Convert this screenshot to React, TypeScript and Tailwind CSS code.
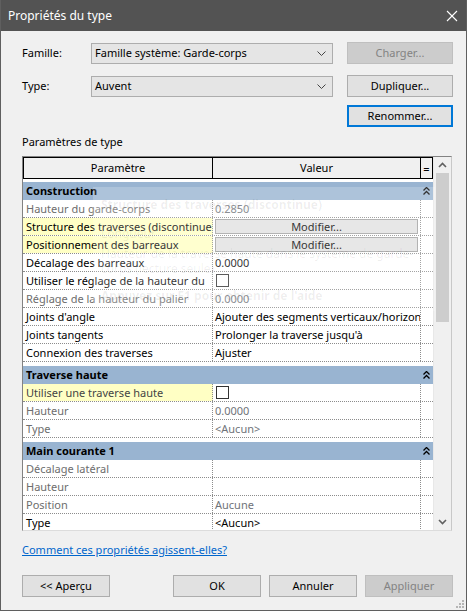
import React from "react";

type RowDef = {
  p: string;
  v?: string;
  kind?: "text" | "button" | "check";
  pGray?: boolean;
  vGray?: boolean;
  yellow?: boolean;
};

type Section = { title: string; rows: RowDef[] };

const sections: Section[] = [
  {
    title: "Construction",
    rows: [
      { p: "Hauteur du garde-corps", v: "0.2850", pGray: true, vGray: true },
      { p: "Structure des traverses (discontinue)", kind: "button", yellow: true },
      { p: "Positionnement des barreaux", kind: "button", yellow: true },
      { p: "Décalage des barreaux", v: "0.0000" },
      { p: "Utiliser le réglage de la hauteur du", kind: "check" },
      { p: "Réglage de la hauteur du palier", v: "0.0000", pGray: true, vGray: true },
      { p: "Joints d'angle", v: "Ajouter des segments verticaux/horizontaux" },
      { p: "Joints tangents", v: "Prolonger la traverse jusqu'à" },
      { p: "Connexion des traverses", v: "Ajuster" },
    ],
  },
  {
    title: "Traverse haute",
    rows: [
      { p: "Utiliser une traverse haute", kind: "check", yellow: true },
      { p: "Hauteur", v: "0.0000", pGray: true, vGray: true },
      { p: "Type", v: "<Aucun>", pGray: true, vGray: true },
    ],
  },
  {
    title: "Main courante 1",
    rows: [
      { p: "Décalage latéral", v: "", pGray: true },
      { p: "Hauteur", v: "", pGray: true },
      { p: "Position", v: "Aucune", pGray: true, vGray: true },
      { p: "Type", v: "<Aucun>" },
    ],
  },
];

function ChevronDown() {
  return (
    <svg width="9" height="5" viewBox="0 0 9 5" className="shrink-0">
      <polyline points="0.5,0.5 4.5,4.5 8.5,0.5" fill="none" stroke="#444" strokeWidth="1" />
    </svg>
  );
}

function DoubleUp() {
  return (
    <svg width="7" height="8" viewBox="0 0 7 8">
      <polyline points="0.5,3.5 3.5,0.5 6.5,3.5" fill="none" stroke="#000" strokeWidth="1.3" />
      <polyline points="0.5,7.5 3.5,4.5 6.5,7.5" fill="none" stroke="#000" strokeWidth="1.3" />
    </svg>
  );
}

function Combo({ value }: { value: string }) {
  return (
    <div className="w-[242px] shrink-0 h-[21px] border border-[#adadad] bg-[#e5e5e5] flex items-center pl-[3px] pr-[6px] justify-between">
      <span>{value}</span>
      <ChevronDown />
    </div>
  );
}

function Btn({ label, disabled, focused, w = "w-[106px]" }: { label: string; disabled?: boolean; focused?: boolean; w?: string }) {
  const base = `${w} shrink-0 h-[22px] flex items-center justify-center`;
  if (disabled) return <div className={`${base} bg-[#cccccc] border border-[#bfbfbf] text-[#838383]`}>{label}</div>;
  if (focused) return <div className={`${base} bg-[#e1e1e1] border-2 border-[#0078d7]`}>{label}</div>;
  return <div className={`${base} bg-[#e1e1e1] border border-[#adadad]`}>{label}</div>;
}

function Row({ r }: { r: RowDef }) {
  return (
    <div className="flex h-[18px] border-b border-dotted border-[#8c8c8c] bg-white">
      <div
        className={`w-[190px] shrink-0 pl-[3px] border-r border-dotted border-[#8c8c8c] overflow-hidden whitespace-nowrap leading-[17px] ${
          r.yellow ? "bg-[#ffffc4]" : ""
        } ${r.pGray ? "text-[#6d6d6d]" : r.yellow && r.kind === "check" ? "text-[#444]" : "text-black"}`}
      >
        {r.p}
      </div>
      <div className="w-[208px] shrink-0 border-r border-dotted border-[#8c8c8c] overflow-hidden whitespace-nowrap leading-[17px]">
        {r.kind === "button" ? (
          <div className="mx-[2px] mt-[1px] h-[15px] bg-[#e1e1e1] border border-[#a0a0a0] flex items-center justify-center leading-none">
            Modifier...
          </div>
        ) : r.kind === "check" ? (
          <div className="ml-[3px] mt-[2px] w-[13px] h-[13px] border border-[#333] bg-white" />
        ) : (
          <span className={`pl-[2px] ${r.vGray ? "text-[#6f7379]" : "text-black"}`}>{r.v}</span>
        )}
      </div>
      <div className="w-[11px] shrink-0" />
    </div>
  );
}

function SectionHead({ title, first }: { title: string; first?: boolean }) {
  return (
    <div className={`${first ? "mt-[3px]" : "mt-[4px]"} h-[18px] shrink-0 flex bg-[#99b4d1] font-bold leading-[18px]`}>
      <div className="w-[398px] pl-[3px]">{title}</div>
      <div className="w-[11px] flex items-center justify-center">
        <DoubleUp />
      </div>
    </div>
  );
}

export default function App() {
  return (
    <div className="w-[467px] h-[611px] bg-[#f0f0f0] border border-[#5f5f5f] border-t-0 flex flex-col relative overflow-hidden text-[11px] text-black font-['Noto_Sans',sans-serif]">
      {/* Title bar */}
      <div className="h-[31px] bg-[#535353] flex items-center justify-between pl-[8px] pr-[9px] shrink-0 -mx-px">
        <span className="text-white text-[12px]">Propriétés du type</span>
        <svg width="12" height="12" viewBox="0 0 12 12">
          <line x1="1" y1="1" x2="11" y2="11" stroke="#fff" strokeWidth="1.1" />
          <line x1="11" y1="1" x2="1" y2="11" stroke="#fff" strokeWidth="1.1" />
        </svg>
      </div>

      <div className="pl-[21px] pr-[13px] flex flex-col">
        {/* Famille */}
        <div className="mt-[11px] flex items-center">
          <div className="w-[69px] shrink-0">Famille:</div>
          <Combo value="Famille système: Garde-corps" />
          <div className="ml-[14px]">
            <Btn label="Charger..." disabled />
          </div>
        </div>
        {/* Type */}
        <div className="mt-[11px] flex items-center">
          <div className="w-[69px] shrink-0">Type:</div>
          <Combo value="Auvent" />
          <div className="ml-[14px]">
            <Btn label="Dupliquer..." />
          </div>
        </div>
        <div className="mt-[8px] flex justify-end">
          <Btn label="Renommer..." focused />
        </div>

        <div className="mt-[7px] h-[16px] leading-[16px]">Paramètres de type</div>

        {/* Property grid */}
        <div className="mt-[6px] w-[430px] h-[375px] border border-t-[#828282] border-l-[#828282] border-r-[#c8c8c8] border-b-[#dcdcdc] flex overflow-hidden">
          <div className="w-[410px] shrink-0 flex flex-col bg-white">
            <div className="flex h-[22px] border-t border-b border-black bg-[#f0f0f0] shrink-0">
              <div className="w-[190px] border-l border-r border-black flex items-center justify-center">Paramètre</div>
              <div className="w-[208px] border-r border-black flex items-center justify-center">Valeur</div>
              <div className="w-[12px] border-r border-black flex items-center justify-center leading-none">=</div>
            </div>
            {sections.map((s, i) => (
              <React.Fragment key={s.title}>
                <SectionHead title={s.title} first={i === 0} />
                {s.rows.map((r, j) => (
                  <Row key={j} r={r} />
                ))}
              </React.Fragment>
            ))}
          </div>
          {/* Scrollbar */}
          <div className="w-[18px] shrink-0 bg-[#f0f0f0] flex flex-col items-center border-l border-[#e8e8e8]">
            <div className="h-[16px] flex items-center justify-center">
              <svg width="9" height="6" viewBox="0 0 9 6">
                <polyline points="1,5 4.5,1.5 8,5" fill="none" stroke="#606060" strokeWidth="1.6" />
              </svg>
            </div>
            <div className="w-[13px] h-[149px] bg-[#cdcdcd]" />
            <div className="flex-1" />
            <div className="h-[16px] flex items-center justify-center">
              <svg width="9" height="6" viewBox="0 0 9 6">
                <polyline points="1,1 4.5,4.5 8,1" fill="none" stroke="#606060" strokeWidth="1.6" />
              </svg>
            </div>
          </div>
        </div>

        <div className="mt-[11px] h-[16px] leading-[16px]">
          <span className="text-[#0066cc] underline">Comment ces propriétés agissent-elles?</span>
        </div>

        <div className="mt-[17px] flex">
          <Btn label="<< Aperçu" w="w-[88px]" />
          <div className="ml-[63px] flex gap-[8px]">
            <Btn label="OK" w="w-[88px]" />
            <Btn label="Annuler" w="w-[88px]" />
            <Btn label="Appliquer" w="w-[88px]" disabled />
          </div>
        </div>
      </div>

      {/* Resize grip */}
      <svg width="8" height="8" viewBox="0 0 8 8" className="absolute right-[2px] bottom-[2px]">
        <rect x="6" y="0" width="2" height="2" fill="#b5b5b5" />
        <rect x="3" y="3" width="2" height="2" fill="#b5b5b5" />
        <rect x="6" y="3" width="2" height="2" fill="#b5b5b5" />
        <rect x="0" y="6" width="2" height="2" fill="#b5b5b5" />
        <rect x="3" y="6" width="2" height="2" fill="#b5b5b5" />
        <rect x="6" y="6" width="2" height="2" fill="#b5b5b5" />
      </svg>

      {/* Fading tooltip */}
      <div className="absolute left-[92px] top-[187px] w-[342px] h-[124px] bg-white/20 text-black/[0.07] pl-[8px] pt-[10px] leading-[15px] pointer-events-none">
        <div className="font-bold text-[12px]">Structure des traverses (discontinue)</div>
        <div className="mt-[14px] text-[12px]">Longueur</div>
        <div className="mt-[5px] text-[12px]">Hauteur de la traverse haute dans le système de garde-</div>
        <div className="text-[12px]">corps (lecture seule)</div>
        <div className="mt-[12px] font-bold text-[12px]">Appuyez sur F1 pour obtenir de l'aide</div>
      </div>
    </div>
  );
}
